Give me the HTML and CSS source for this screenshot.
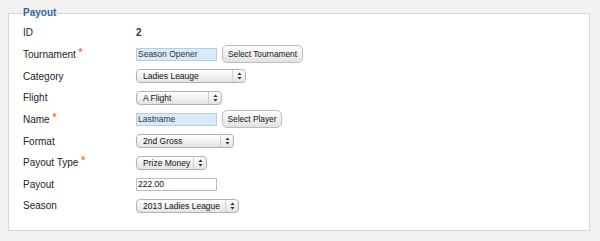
FILE: index.html
```html
<!DOCTYPE html>
<html lang="en">
<head>
    <meta charset="UTF-8">
    <title>Payout</title>
    <link rel="stylesheet" href="styles.css">
</head>
<body>

    <fieldset class="panel">
        <legend>Payout</legend>

        <div class="row">
            <span class="label">ID</span>
            <span class="value-text">2</span>
        </div>

        <div class="row">
            <span class="label">Tournament <span class="req">*</span></span>
            <div class="field">
                <input class="text-input lookup" type="text" value="Season Opener">
                <button class="btn btn-tournament">Select Tournament</button>
            </div>
        </div>

        <div class="row">
            <span class="label">Category</span>
            <div class="select select-category">
                <span class="select-value">Ladies Leauge</span>
                <span class="select-arrows"><svg width="5" height="8" viewBox="0 0 5 8"><path d="M2.5 0.5 L4.6 3 L0.4 3 Z M2.5 7.5 L4.6 5 L0.4 5 Z" fill="#333"/></svg></span>
            </div>
        </div>

        <div class="row">
            <span class="label">Flight</span>
            <div class="select select-flight">
                <span class="select-value">A Flight</span>
                <span class="select-arrows"><svg width="5" height="8" viewBox="0 0 5 8"><path d="M2.5 0.5 L4.6 3 L0.4 3 Z M2.5 7.5 L4.6 5 L0.4 5 Z" fill="#333"/></svg></span>
            </div>
        </div>

        <div class="row">
            <span class="label">Name <span class="req">*</span></span>
            <div class="field">
                <input class="text-input lookup" type="text" value="Lastname">
                <button class="btn btn-player">Select Player</button>
            </div>
        </div>

        <div class="row">
            <span class="label">Format</span>
            <div class="select select-format">
                <span class="select-value">2nd Gross</span>
                <span class="select-arrows"><svg width="5" height="8" viewBox="0 0 5 8"><path d="M2.5 0.5 L4.6 3 L0.4 3 Z M2.5 7.5 L4.6 5 L0.4 5 Z" fill="#333"/></svg></span>
            </div>
        </div>

        <div class="row">
            <span class="label">Payout Type <span class="req">*</span></span>
            <div class="select select-type">
                <span class="select-value">Prize Money</span>
                <span class="select-arrows"><svg width="5" height="8" viewBox="0 0 5 8"><path d="M2.5 0.5 L4.6 3 L0.4 3 Z M2.5 7.5 L4.6 5 L0.4 5 Z" fill="#333"/></svg></span>
            </div>
        </div>

        <div class="row">
            <span class="label">Payout</span>
            <input class="text-input" type="text" value="222.00">
        </div>

        <div class="row">
            <span class="label">Season</span>
            <div class="select select-season">
                <span class="select-value">2013 Ladies League</span>
                <span class="select-arrows"><svg width="5" height="8" viewBox="0 0 5 8"><path d="M2.5 0.5 L4.6 3 L0.4 3 Z M2.5 7.5 L4.6 5 L0.4 5 Z" fill="#333"/></svg></span>
            </div>
        </div>
    </fieldset>

</body>
</html>
```

FILE: styles.css
```css
* {
    box-sizing: border-box;
}

html, body {
    margin: 0;
    background: #f2f2f2;
    font-family: 'Liberation Sans', Arial, sans-serif;
}

body {
    padding-top: 7px;
}

/* Panel */
.panel {
    margin: 0 10px 0 8px;
    padding: 3px 14px 13px 14px;
    border: 1px solid #d6d6d6;
    background: #fff;
}

.panel legend {
    padding: 0;
    font-size: 10px;
    line-height: 12px;
    font-weight: bold;
    color: #2f64a0;
}

/* Rows */
.row {
    display: flex;
    align-items: center;
    height: 21.65px;
}

.label {
    width: 113px;
    flex-shrink: 0;
    font-size: 10px;
    color: #222;
}

.req {
    color: #f07a2a;
    font-size: 10px;
    font-weight: bold;
    position: relative;
    top: -2px;
}

.value-text {
    font-size: 10px;
    font-weight: bold;
    color: #333;
}

.field {
    display: flex;
    align-items: center;
    gap: 5px;
}

/* Inputs */
.text-input {
    width: 81px;
    height: 13px;
    margin: 0;
    padding: 0 1px;
    border: 1px solid #bcbcbc;
    background: #fff;
    font-family: 'Liberation Sans', Arial, sans-serif;
    font-size: 8.5px;
    color: #111;
}

.text-input.lookup {
    background: #d8ebfb;
    border-color: #b9cde0;
    color: #333;
}

/* Buttons */
.btn {
    height: 18px;
    margin: 0;
    padding: 0;
    border: 1px solid #bdbdbd;
    border-radius: 5px;
    background: linear-gradient(#fefefe, #e2e2e2);
    font-family: 'Liberation Sans', Arial, sans-serif;
    font-size: 8.3px;
    color: #111;
    cursor: pointer;
}

.btn-tournament {
    width: 81px;
}

.btn-player {
    width: 60px;
}

/* Select boxes */
.select {
    display: flex;
    align-items: center;
    height: 14px;
    border: 1px solid #b2b2b2;
    border-radius: 4px;
    background: linear-gradient(#ffffff, #e3e3e3);
    font-size: 8.5px;
    color: #111;
}

.select-value {
    flex: 1;
    padding-left: 6px;
    white-space: nowrap;
    overflow: hidden;
}

.select-arrows {
    display: flex;
    align-items: center;
    justify-content: center;
    width: 13px;
    height: 100%;
    border-left: 1px solid #d0d0d0;
}

.select-category { width: 110px; }
.select-flight { width: 86px; }
.select-format { width: 98px; }
.select-type { width: 71px; }
.select-season { width: 103px; }
```
